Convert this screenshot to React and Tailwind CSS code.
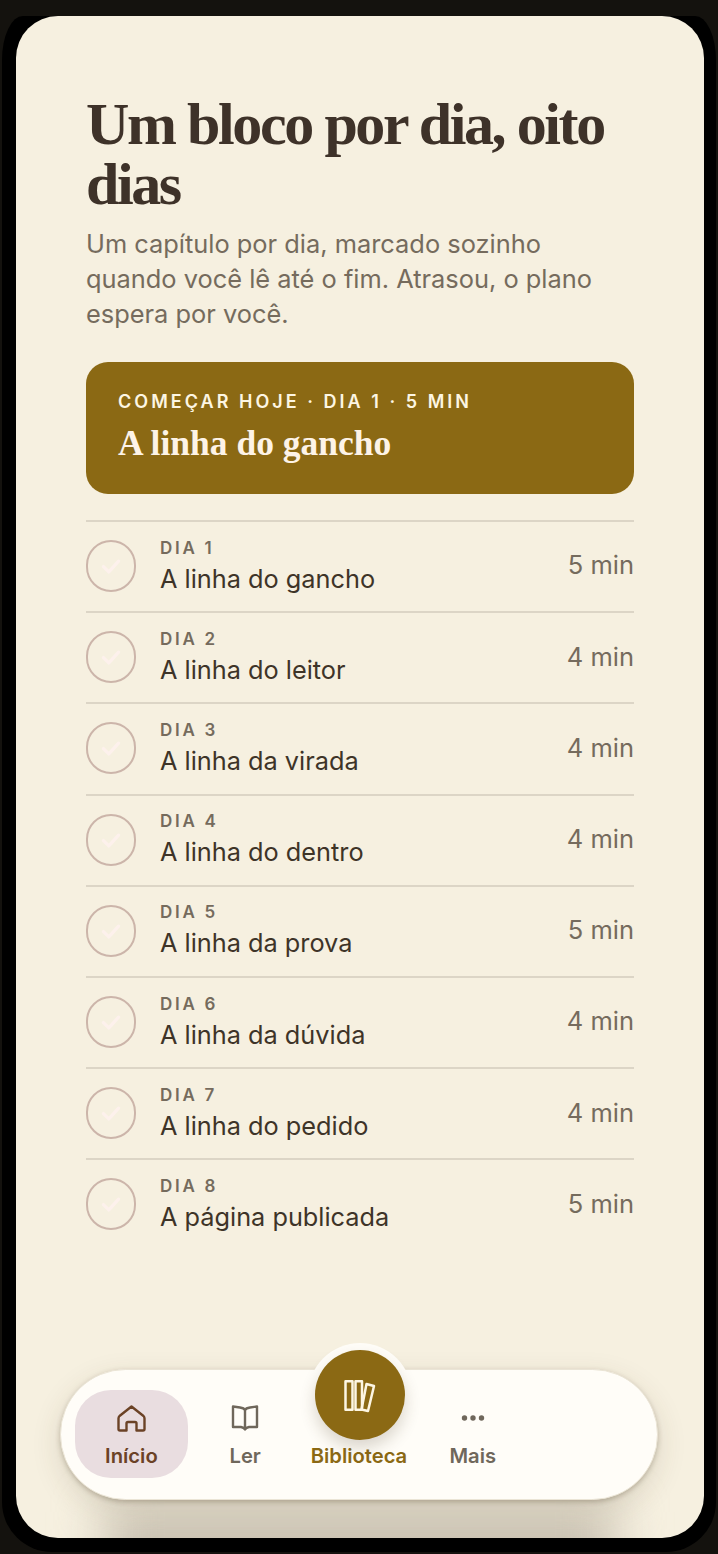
import React from 'react';

const days = [
  { label: 'DIA 1', title: 'A linha do gancho', time: '5 min' },
  { label: 'DIA 2', title: 'A linha do leitor', time: '4 min' },
  { label: 'DIA 3', title: 'A linha da virada', time: '4 min' },
  { label: 'DIA 4', title: 'A linha do dentro', time: '4 min' },
  { label: 'DIA 5', title: 'A linha da prova', time: '5 min' },
  { label: 'DIA 6', title: 'A linha da dúvida', time: '4 min' },
  { label: 'DIA 7', title: 'A linha do pedido', time: '4 min' },
  { label: 'DIA 8', title: 'A página publicada', time: '5 min' },
];

const serif = "font-['Liberation_Serif',serif]";

const HomeIcon = () => (
  <svg width="32" height="32" viewBox="0 0 32 32" fill="none" stroke="#6b4226" strokeWidth="2.4" strokeLinecap="round" strokeLinejoin="round">
    <path d="M16.5 4.500L28.500 14Q29.500 15 29.500 16.500V27Q29.500 28.500 28 28.500H21.500V21.500Q21.500 20 20 20H13Q11.500 20 11.500 21.500V28.500H5Q3.500 28.500 3.500 27V16.500Q3.500 15 4.500 14Z" />
  </svg>
);

const BookIcon = () => (
  <svg width="32" height="32" viewBox="0 0 32 32" fill="none" stroke="#6f675b" strokeWidth="2.4" strokeLinejoin="round">
    <path d="M4 4.500L11 5.500Q15 6 16 8Q17 6 21 5.500L28 4.500V25H20Q17 25.500 16 27.500Q15 25.500 12 25H4Z" />
    <path d="M16 8V27" />
  </svg>
);

const LibraryIcon = () => (
  <svg width="36" height="36" viewBox="0 0 36 36" fill="none" stroke="#fdf6e3" strokeWidth="2.5" strokeLinejoin="round">
    <rect x="3.500" y="4.300" width="7" height="28.400" />
    <rect x="13.500" y="4.300" width="6.500" height="28.400" />
    <path d="M24.500 7L32 9L26 34L19.500 32.500Z" />
  </svg>
);

const DotsIcon = () => (
  <svg width="32" height="32" viewBox="0 0 32 32" fill="#6f675b">
    <circle cx="7.500" cy="16" r="2.700" />
    <circle cx="16" cy="16" r="2.700" />
    <circle cx="24.500" cy="16" r="2.700" />
  </svg>
);

const DayRow = ({ day }) => (
  <div className="flex h-[91.2px] items-center gap-6 border-t-2 border-[#dcd5c6] pb-[1px]">
    <div className="flex h-[52px] w-[50px] flex-shrink-0 items-center justify-center rounded-full border-2 border-[#ccb5aa]">
      <svg width="26" height="26" viewBox="0 0 24 24" fill="none" stroke="#fdf1ec" strokeWidth="3" strokeLinecap="round" strokeLinejoin="round">
        <path d="M5 12.500l5 5 9-10" />
      </svg>
    </div>
    <div className="flex-1">
      <div className="text-[17px] leading-[22px] font-semibold tracking-[0.16em] text-[#756b5d]">{day.label}</div>
      <div className="mt-[3px] text-[25.3px] leading-[34px] text-[#3e3428]">{day.title}</div>
    </div>
    <div className="mb-[1px] text-[25.5px] text-[#756b5d]">{day.time}</div>
  </div>
);

const NavItem = ({ icon, label, color, pill }) => (
  <div className={`flex h-[88px] flex-col items-center pt-[12px] ${pill ? 'rounded-[36px] bg-[#e9dde0]' : ''}`}>
    {icon}
    <span className={`mt-[9px] text-[20.2px] leading-[26px] font-semibold ${color}`}>{label}</span>
  </div>
);

const App = () => {
  return (
    <div className="h-[1554px] w-[718px] overflow-hidden bg-[#14120e] px-[2px] pt-4 pb-[2px] font-['Inter',sans-serif]">
      <div className="h-full rounded-tl-[21px_44px] rounded-tr-[21px_44px] rounded-b-[50px] bg-black pr-[12px] pb-[14px] pl-[14px]">
        <div className="relative h-full overflow-hidden rounded-[42px] bg-[#f6f0e0] px-[70px] pt-[78px]">
          <h1 className={`${serif} text-[60px] leading-[60px] font-bold tracking-[-0.04em] text-[#3e3229]`}>
            Um bloco por dia, oito dias
          </h1>
          <p className="mt-[12px] max-w-[520px] text-[25.4px] leading-[35px] text-[#756b5d]">
            Um capítulo por dia, marcado sozinho quando você lê até o fim. Atrasou, o plano espera por você.
          </p>

          <div className="mt-[31px] h-[132px] rounded-[22px] bg-[#8b6914] px-8 pt-[27px]">
            <div className="text-[18px] leading-[26px] font-semibold tracking-[0.168em] text-[#fdf6e3]">
              COMEÇAR HOJE · DIA 1 · 5 MIN
            </div>
            <div className={`${serif} mt-[6px] text-[35.5px] leading-[44px] font-bold text-[#fdf3e7]`}>A linha do gancho</div>
          </div>

          <div className="mt-[26px]">
            {days.map((day) => (
              <DayRow key={day.label} day={day} />
            ))}
          </div>

          {/* sombra difusa embaixo da barra */}
          <div className="absolute right-[89px] -bottom-[62px] left-[89px] h-[88px] bg-[#c6beae] blur-[25px]" />

          <nav className="absolute bottom-[38px] left-[44px] h-[131px] w-[598px] rounded-full border border-[#ebe5d6] bg-[#fffdf8] px-[13.5px] shadow-[0_2px_5px_rgba(60,45,20,0.25),0_10px_30px_rgba(70,55,30,0.14)]">
            <div className="-mt-px grid h-full grid-cols-5 items-center">
              <NavItem icon={<HomeIcon />} label="Início" color="text-[#6b4226]" pill />
              <NavItem icon={<BookIcon />} label="Ler" color="text-[#6f675b]" />
              <div className="flex h-[88px] flex-col items-center pt-[53px]">
                <span className="text-[20.2px] leading-[26px] font-semibold text-[#8b6914]">Biblioteca</span>
              </div>
              <NavItem icon={<DotsIcon />} label="Mais" color="text-[#6f675b]" />
            </div>
          </nav>

          <div className="absolute top-[1327px] left-[292px] rounded-full bg-[#fffdf8] p-[7px]">
            <div className="flex h-[90px] w-[90px] items-center justify-center rounded-full bg-[#8b6914] shadow-[0_8px_16px_rgba(70,55,30,0.2)]">
              <LibraryIcon />
            </div>
          </div>
        </div>
      </div>
    </div>
  );
};

export default App;
